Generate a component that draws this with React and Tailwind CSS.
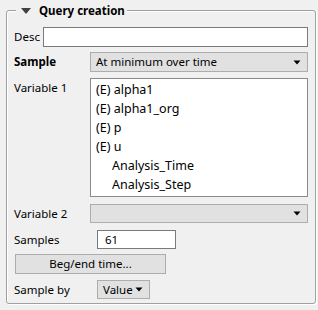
const font = { fontFamily: '"Noto Sans", "Open Sans", sans-serif' };

function Arrow() {
  return (
    <svg width="8" height="5" viewBox="0 0 8 5" className="shrink-0">
      <path d="M0.5 0.5 H7.5 L4 4.5 Z" fill="#000" />
    </svg>
  );
}

function Combo({ value, className = "" }) {
  return (
    <div
      className={`flex items-center justify-between border border-[#adadad] bg-[#e1e1e1] pl-[5px] pr-[6px] ${className}`}
    >
      <span className="leading-none">{value}</span>
      <Arrow />
    </div>
  );
}

export default function App() {
  const vars = [
    { label: "(E) alpha1" },
    { label: "(E) alpha1_org" },
    { label: "(E) p" },
    { label: "(E) u" },
    { label: "Analysis_Time", indent: true },
    { label: "Analysis_Step", indent: true },
  ];

  return (
    <div
      className="w-[318px] h-[310px] bg-[#f0f0f0] text-[11.5px] text-black pt-[10px] pl-[6px]"
      style={font}
    >
      <div className="relative w-[310px] h-[294px] border border-[#a0a0a0] rounded-[3px] shadow-[inset_1px_1px_0_#ffffff,1px_1px_0_#ffffff]">
        <div className="absolute -top-[8px] left-[9px] flex items-center gap-[8px] bg-[#f0f0f0] pl-[5px] pr-[2px] h-[15px]">
          <svg width="10" height="6" viewBox="0 0 10 6">
            <path d="M0 0 H10 L5 6 Z" fill="#404040" />
          </svg>
          <span className="font-bold text-[11.5px] leading-none">Query creation</span>
        </div>

        <div className="flex flex-col pt-[16px] pl-[7px] pr-[7px]">
          <div className="flex items-center h-[20px]">
            <span className="w-[29px]">Desc</span>
            <div className="flex-1 h-full border border-[#7a7a7a] bg-white" />
          </div>

          <div className="flex items-center h-[20px] mt-[5px]">
            <span className="w-[76px] font-bold">Sample</span>
            <Combo value="At minimum over time" className="flex-1 h-full" />
          </div>

          <div className="flex mt-[6px]">
            <span className="w-[76px] pt-[1px]">Variable 1</span>
            <div className="flex-1 h-[119px] border border-[#8a8a8a] bg-white pt-[2px] pl-[5px] text-[12.5px]">
              {vars.map((v) => (
                <div
                  key={v.label}
                  className={`h-[19px] flex items-center ${v.indent ? "pl-[16px]" : ""}`}
                >
                  {v.label}
                </div>
              ))}
            </div>
          </div>

          <div className="flex items-center h-[19px] mt-[7px]">
            <span className="w-[76px]">Variable 2</span>
            <Combo value="" className="flex-1 h-full" />
          </div>

          <div className="flex items-center h-[19px] mt-[7px]">
            <span className="w-[83px]">Samples</span>
            <div className="w-[79px] h-full border border-[#7a7a7a] bg-white flex items-center pl-[7px]">
              61
            </div>
          </div>

          <button className="mt-[5px] ml-[1px] w-[151px] h-[20px] border border-[#adadad] bg-[#e1e1e1] text-[11.5px] leading-none">
            Beg/end time...
          </button>

          <div className="flex items-center h-[19px] mt-[6px]">
            <span className="w-[83px]">Sample by</span>
            <Combo value="Value" className="w-[53px] shrink-0 h-full pl-[3px]" />
          </div>
        </div>
      </div>
    </div>
  );
}
